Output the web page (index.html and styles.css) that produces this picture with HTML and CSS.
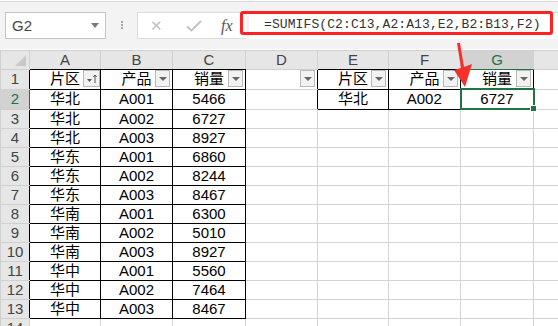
FILE: index.html
```html
<!DOCTYPE html>
<html lang="zh-CN">

<head>
  <meta charset="UTF-8">
  <title>SUMIFS</title>
  <link rel="stylesheet" href="styles.css">
</head>

<body>

  <div class="window">
    <div class="toolbar">
      <div class="name-box">
        <span>G2</span>
        <span class="caret"></span>
      </div>
      <div class="grip"><i></i><i></i><i></i></div>
      <div class="fx-buttons">
        <span class="btn-x">✕</span>
        <span class="btn-ok">
          <svg width="16" height="12" viewBox="0 0 16 12"><path d="M1 6.5 L5.5 10.5 L15 1" fill="none" stroke="#c3c3c3" stroke-width="2"/></svg>
        </span>
        <span class="btn-fx">fx</span>
      </div>
      <div class="formula-input">=SUMIFS(C2:C13,A2:A13,E2,B2:B13,F2)</div>
    </div>

    <table class="sheet">
      <colgroup>
        <col style="width:29px">
        <col style="width:71px">
        <col style="width:72px">
        <col style="width:73px">
        <col style="width:72px">
        <col style="width:71px">
        <col style="width:72px">
        <col style="width:73px">
        <col style="width:72px">
      </colgroup>
      <tr class="col-head">
        <td class="corner"><span class="corner-tri"></span></td>
        <td class="dark-b">A</td>
        <td class="dark-b">B</td>
        <td class="dark-b">C</td>
        <td>D</td>
        <td class="dark-b">E</td>
        <td class="dark-b">F</td>
        <td class="sel-col">G</td>
        <td></td>
      </tr>
      <tr>
        <td class="rh edge">1</td>
        <td class="t">片区<span class="filter sort"><svg width="13" height="13" viewBox="0 0 13 13"><path d="M2 7 h5 l-2.5 3 z" fill="#555"/><path d="M10 11 V3 M8.3 5 L10 3 L11.7 5" fill="none" stroke="#555" stroke-width="1"/></svg></span></td>
        <td class="t">产品<span class="filter"></span></td>
        <td class="t">销量<span class="filter"></span></td>
        <td class="edge-r"><span class="filter"></span></td>
        <td class="t">片区<span class="filter"></span></td>
        <td class="t">产品<span class="filter"></span></td>
        <td class="t">销量<span class="filter"></span></td>
        <td></td>
      </tr>
      <tr>
        <td class="rh sel-row">2</td>
        <td class="t">华北</td>
        <td class="t">A001</td>
        <td class="t">5466</td>
        <td class="edge-r"></td>
        <td class="t">华北</td>
        <td class="t">A002</td>
        <td class="t active">6727<span class="handle"></span></td>
        <td></td>
      </tr>
      <tr><td class="rh edge">3</td><td class="t">华北</td><td class="t">A002</td><td class="t">6727</td><td></td><td></td><td></td><td></td><td></td></tr>
      <tr><td class="rh edge">4</td><td class="t">华北</td><td class="t">A003</td><td class="t">8927</td><td></td><td></td><td></td><td></td><td></td></tr>
      <tr><td class="rh edge">5</td><td class="t">华东</td><td class="t">A001</td><td class="t">6860</td><td></td><td></td><td></td><td></td><td></td></tr>
      <tr><td class="rh edge">6</td><td class="t">华东</td><td class="t">A002</td><td class="t">8244</td><td></td><td></td><td></td><td></td><td></td></tr>
      <tr><td class="rh edge">7</td><td class="t">华东</td><td class="t">A003</td><td class="t">8467</td><td></td><td></td><td></td><td></td><td></td></tr>
      <tr><td class="rh edge">8</td><td class="t">华南</td><td class="t">A001</td><td class="t">6300</td><td></td><td></td><td></td><td></td><td></td></tr>
      <tr><td class="rh edge">9</td><td class="t">华南</td><td class="t">A002</td><td class="t">5010</td><td></td><td></td><td></td><td></td><td></td></tr>
      <tr><td class="rh edge">10</td><td class="t">华南</td><td class="t">A003</td><td class="t">8927</td><td></td><td></td><td></td><td></td><td></td></tr>
      <tr><td class="rh edge">11</td><td class="t">华中</td><td class="t">A001</td><td class="t">5560</td><td></td><td></td><td></td><td></td><td></td></tr>
      <tr><td class="rh edge">12</td><td class="t">华中</td><td class="t">A002</td><td class="t">7464</td><td></td><td></td><td></td><td></td><td></td></tr>
      <tr><td class="rh edge">13</td><td class="t">华中</td><td class="t">A003</td><td class="t">8467</td><td></td><td></td><td></td><td></td><td></td></tr>
      <tr><td class="rh">14</td><td></td><td></td><td></td><td></td><td></td><td></td><td></td><td></td></tr>
    </table>

    <!-- annotation drawn over the screenshot -->
    <div class="mark-box"></div>
    <svg class="mark-arrow" width="30" height="50" viewBox="0 0 30 50">
      <path d="M6 0 L9 0 L13 24 L21 21 L14 44 L3 27 L10 25 Z" fill="#f5302a"/>
    </svg>
  </div>

</body>

</html>
```

FILE: styles.css
```css
body {
  margin: 0;
  font-family: "Liberation Sans", "Noto Sans CJK SC", sans-serif;
  background: #fff;
}

.window {
  position: relative;
  width: 558px;
  height: 326px;
  overflow: hidden;
}

/* ---- formula bar ---- */

.toolbar {
  display: flex;
  align-items: flex-start;
  height: 48px;
  margin-top: 1px;
  padding-top: 10px;
  box-sizing: border-box;
  border-top: 1px solid #d9d9d9;
  background: #f3f3f3;
}

.name-box {
  display: flex;
  align-items: center;
  justify-content: space-between;
  width: 101px;
  height: 27px;
  margin-left: 5px;
  padding: 0 6px 0 6px;
  box-sizing: border-box;
  background: #fff;
  border: 1px solid #c6c6c6;
  color: #444;
  font-size: 15px;
}

.caret {
  width: 0;
  height: 0;
  border-left: 4px solid transparent;
  border-right: 4px solid transparent;
  border-top: 5px solid #7a7a7a;
}

.grip {
  display: flex;
  flex-direction: column;
  gap: 1px;
  width: 31px;
  padding-top: 9px;
  align-items: center;
}

.grip i {
  display: block;
  width: 2px;
  height: 2px;
  background: #a6a6a6;
}

.fx-buttons {
  display: flex;
  align-items: center;
  width: 109px;
  height: 27px;
  box-sizing: border-box;
  background: #fff;
  border: 1px solid #dcdcdc;
  border-right: none;
}

.btn-x {
  margin-left: 12px;
  color: #c3c3c3;
  font-size: 15px;
}

.btn-ok {
  display: flex;
  margin-left: 23px;
}

.btn-fx {
  margin-left: 19px;
  font-family: "Liberation Serif", serif;
  font-style: italic;
  font-size: 16px;
  color: #555;
}

.formula-input {
  flex: 1;
  height: 27px;
  margin-left: 3px;
  padding-left: 15px;
  box-sizing: border-box;
  background: #fff;
  border-top: 1px solid #d4d4d4;
  font-family: "Liberation Mono", monospace;
  font-size: 13px;
  letter-spacing: 0.1px;
  line-height: 24px;
  color: #333;
}

/* ---- grid ---- */

.sheet {
  border-collapse: collapse;
  table-layout: fixed;
  width: 605px;
  margin-top: 1px;
}

.sheet td {
  position: relative;
  height: 18px;
  padding: 0;
  border: 1px solid #d4d4d4;
  text-align: center;
  font-size: 15px;
  line-height: 18px;
  color: #000;
  white-space: nowrap;
  overflow: visible;
}

.col-head td {
  height: 17px;
  background: #e6e6e6;
  border-color: #d0d0d0;
  color: #444;
}

.col-head td.dark-b {
  border-bottom-color: #000;
}

.col-head td.sel-col {
  background: #d2d2d2;
  color: #217346;
  border-bottom: 1px solid #217346;
}

.corner-tri {
  position: absolute;
  right: 3px;
  bottom: 3px;
  width: 0;
  height: 0;
  border-left: 11px solid transparent;
  border-bottom: 11px solid #c9c9c9;
}

.sheet td.rh {
  background: #e6e6e6;
  border-color: #d0d0d0;
  color: #444;
}

.sheet td.rh.edge {
  border-right-color: #000;
}

.sheet td.rh.sel-row {
  background: #d2d2d2;
  color: #217346;
  border-right-color: #217346;
}

.sheet td.edge-r {
  border-right-color: #000;
}

.sheet td.t {
  border-color: #000;
}

.sheet td.active {
  border: 2px solid #217346;
}

.handle {
  position: absolute;
  right: -4px;
  bottom: -4px;
  width: 5px;
  height: 5px;
  background: #217346;
  border: 1px solid #fff;
}

.filter {
  position: absolute;
  top: 0;
  right: 2px;
  width: 13px;
  height: 15px;
  background: #f2f2f2;
  border: 1px solid #b9b9b9;
}

.filter::after {
  content: "";
  position: absolute;
  left: 3px;
  top: 6px;
  border-left: 4px solid transparent;
  border-right: 4px solid transparent;
  border-top: 4px solid #666;
}

.filter.sort {
  right: 0;
  width: 15px;
}

.filter.sort::after {
  display: none;
}

.filter.sort svg {
  display: block;
  margin: 1px 0 0 1px;
}

/* ---- annotations ---- */

.mark-box {
  position: absolute;
  left: 240px;
  top: 11px;
  width: 313px;
  height: 24px;
  box-sizing: border-box;
  border: 3px solid #f22;
  border-radius: 3px;
}

.mark-arrow {
  position: absolute;
  left: 451px;
  top: 43px;
}
```
